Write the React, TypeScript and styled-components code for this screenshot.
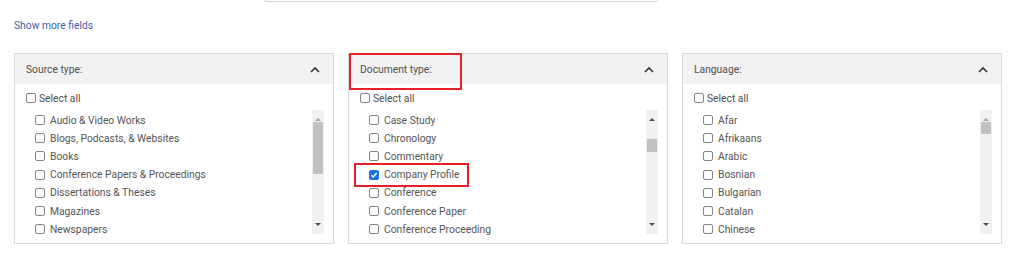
import styled, { createGlobalStyle } from "styled-components";

const GlobalStyle = createGlobalStyle`
  body {
    margin: 0;
    background: #fff;
    font-family: Roboto, "Liberation Sans", Arial, sans-serif;
  }
`;

const Page = styled.div`
  position: relative;
  width: 1024px;
  height: 269px;
  padding: 0 0 0 14px;
  box-sizing: border-box;
`;

const SearchBoxEdge = styled.div`
  margin-left: 250px;
  width: 392px;
  height: 1px;
  border: 1px solid #d4d4d4;
  border-top: none;
  border-radius: 0 0 4px 4px;
`;

const MoreLink = styled.a`
  display: block;
  margin-top: 17px;
  color: #3d5ea8;
  font-size: 10.3px;
  line-height: 13px;
  text-decoration: none;
  cursor: pointer;
`;

const PanelRow = styled.div`
  display: flex;
  gap: 14px;
  margin-top: 21px;
`;

const Panel = styled.section`
  width: 320px;
  height: 191px;
  box-sizing: border-box;
  border: 1px solid #d9d9d9;
  display: flex;
  flex-direction: column;
`;

const PanelHeader = styled.div`
  height: 30px;
  flex-shrink: 0;
  box-sizing: border-box;
  background: #f2f2f2;
  display: flex;
  align-items: center;
  justify-content: space-between;
  padding: 1px 13px 0 11px;
  color: #505050;
  font-size: 10.3px;
`;

const SelectAll = styled.label`
  display: flex;
  align-items: center;
  gap: 3px;
  height: 26px;
  flex-shrink: 0;
  padding: 2px 0 0 11px;
  box-sizing: border-box;
  color: #505050;
  font-size: 10.3px;
`;

const ListArea = styled.div`
  display: flex;
  height: 127px;
  margin-right: 9px;
`;

const List = styled.ul`
  flex: 1;
  list-style: none;
  margin: 0;
  padding: 1px 0 0 20px;
  overflow: hidden;
`;

const Item = styled.li`
  display: flex;
  align-items: center;
  gap: 5px;
  height: 18.2px;
  color: #555;
  font-size: 10.3px;
`;

const Box = styled.span<{ $checked?: boolean }>`
  width: 10px;
  height: 10px;
  box-sizing: border-box;
  border: 1px solid ${(p) => (p.$checked ? "#1a73e8" : "#858585")};
  border-radius: 2px;
  background: ${(p) => (p.$checked ? "#1a73e8" : "#fff")};
  display: inline-flex;
  align-items: center;
  justify-content: center;
  flex-shrink: 0;
`;

const Scrollbar = styled.div`
  width: 12px;
  height: 124px;
  background: #f1f1f1;
  display: flex;
  flex-direction: column;
  align-items: center;
  position: relative;
`;

const ArrowBtn = styled.div<{ $down?: boolean; $dim?: boolean }>`
  width: 0;
  height: 0;
  margin: ${(p) => (p.$down ? "auto 0 8px" : "8px 0 0")};
  border-left: 3px solid transparent;
  border-right: 3px solid transparent;
  ${(p) =>
    p.$down
      ? `border-top: 3px solid ${p.$dim ? "#a3a3a3" : "#505050"};`
      : `border-bottom: 3px solid ${p.$dim ? "#a3a3a3" : "#505050"};`}
`;

const Thumb = styled.div`
  position: absolute;
  left: 1px;
  right: 1px;
  background: #c1c1c1;
`;

const Highlight = styled.div`
  position: absolute;
  border: 2px solid #e5202b;
  box-sizing: border-box;
  pointer-events: none;
`;

function Check({ checked }: { checked?: boolean }) {
  return (
    <Box $checked={checked}>
      {checked && (
        <svg width="8" height="8" viewBox="0 0 8 8">
          <path d="M1.3 4.2 L3.2 6 L6.7 1.9" fill="none" stroke="#fff" strokeWidth="1.5" />
        </svg>
      )}
    </Box>
  );
}

function Chevron() {
  return (
    <svg width="10" height="7" viewBox="0 0 10 7">
      <path d="M1 6 L5 2 L9 6" fill="none" stroke="#333" strokeWidth="1.6" />
    </svg>
  );
}

type Facet = {
  title: string;
  items: string[];
  checked?: string;
  thumbTop: number;
  thumbHeight: number;
  upDim?: boolean;
};

const facets: Facet[] = [
  {
    title: "Source type:",
    items: [
      "Audio & Video Works",
      "Blogs, Podcasts, & Websites",
      "Books",
      "Conference Papers & Proceedings",
      "Dissertations & Theses",
      "Magazines",
      "Newspapers",
    ],
    thumbTop: 12,
    thumbHeight: 52,
    upDim: true,
  },
  {
    title: "Document type:",
    items: [
      "Case Study",
      "Chronology",
      "Commentary",
      "Company Profile",
      "Conference",
      "Conference Paper",
      "Conference Proceeding",
    ],
    checked: "Company Profile",
    thumbTop: 29,
    thumbHeight: 13,
  },
  {
    title: "Language:",
    items: ["Afar", "Afrikaans", "Arabic", "Bosnian", "Bulgarian", "Catalan", "Chinese"],
    thumbTop: 12,
    thumbHeight: 12,
    upDim: true,
  },
];

export default function App() {
  return (
    <>
      <GlobalStyle />
      <Page>
        <SearchBoxEdge />
        <MoreLink>Show more fields</MoreLink>
        <PanelRow>
          {facets.map((f) => (
            <Panel key={f.title}>
              <PanelHeader>
                <span>{f.title}</span>
                <Chevron />
              </PanelHeader>
              <SelectAll>
                <Check />
                Select all
              </SelectAll>
              <ListArea>
                <List>
                  {f.items.map((it) => (
                    <Item key={it}>
                      <Check checked={it === f.checked} />
                      {it}
                    </Item>
                  ))}
                </List>
                <Scrollbar>
                  <ArrowBtn $dim={f.upDim} />
                  <Thumb style={{ top: f.thumbTop, height: f.thumbHeight }} />
                  <ArrowBtn $down />
                </Scrollbar>
              </ListArea>
            </Panel>
          ))}
        </PanelRow>
        <Highlight style={{ left: 349, top: 53, width: 113, height: 37 }} />
        <Highlight style={{ left: 354, top: 163, width: 115, height: 24 }} />
      </Page>
    </>
  );
}
